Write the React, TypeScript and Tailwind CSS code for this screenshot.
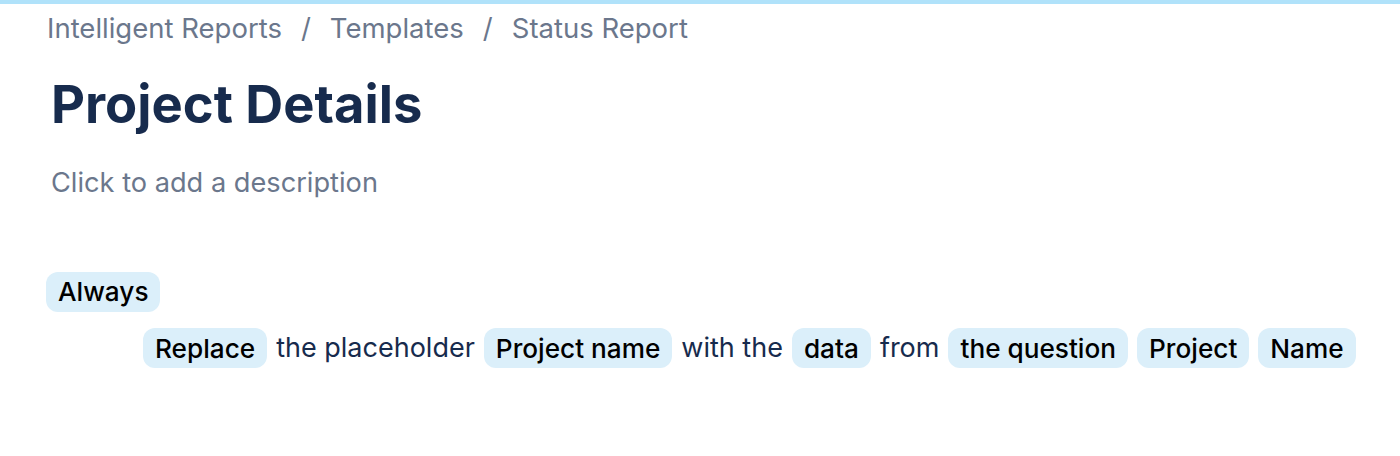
import React from "react";

const Chip = ({ children }: { children: React.ReactNode }) => (
  <span className="inline-flex h-10 items-center rounded-xl bg-[#dbeffa] px-3 text-[26.2px] font-medium text-black">
    {children}
  </span>
);

const App = () => {
  return (
    <div
      className="min-h-[456px] bg-white"
      style={{ fontFamily: "Inter, 'Noto Sans', sans-serif" }}
    >
      <div className="h-1 bg-[#b0e2fa]" />

      <nav className="flex items-center gap-[19px] pl-[47px] pt-1 text-[27.5px] leading-[40px] text-[#6b778c]">
        <span>Intelligent Reports</span>
        <span>/</span>
        <span>Templates</span>
        <span>/</span>
        <span>Status Report</span>
      </nav>

      <h1 className="pl-[51px] pt-[30px] text-[52.5px] font-bold leading-[53px] text-[#172b4d]">
        Project Details
      </h1>

      <p className="pl-[51px] pt-[32px] text-[27.2px] leading-[40px] text-[#6b778c]">
        Click to add a description
      </p>

      <div className="mt-[69px] pl-[46px] text-[27px]">
        <div className="flex">
          <Chip>Always</Chip>
        </div>
        <div className="mt-4 flex items-center gap-[9px] pl-[97px] text-[#172b4d]">
          <Chip>Replace</Chip>
          <span>the placeholder</span>
          <Chip>Project name</Chip>
          <span>with the</span>
          <Chip>data</Chip>
          <span>from</span>
          <Chip>the question</Chip>
          <Chip>Project</Chip>
          <Chip>Name</Chip>
        </div>
      </div>
    </div>
  );
};

export default App;
